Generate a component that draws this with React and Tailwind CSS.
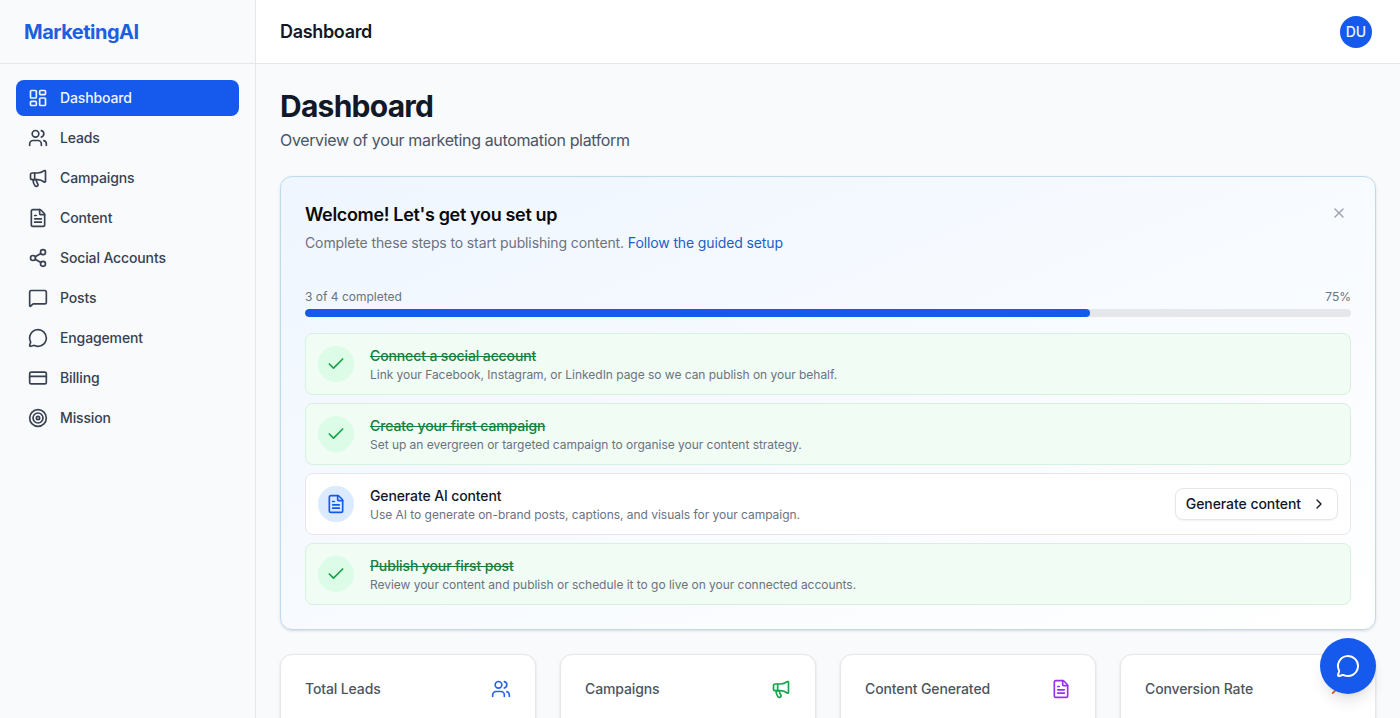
import {
  LayoutDashboard,
  Users,
  Megaphone,
  FileText,
  Share2,
  MessageSquare,
  MessageCircle,
  CreditCard,
  Target,
  Check,
  X,
  ChevronRight,
  TrendingUp,
} from "lucide-react";

const navItems = [
  { label: "Dashboard", icon: LayoutDashboard, active: true },
  { label: "Leads", icon: Users },
  { label: "Campaigns", icon: Megaphone },
  { label: "Content", icon: FileText },
  { label: "Social Accounts", icon: Share2 },
  { label: "Posts", icon: MessageSquare },
  { label: "Engagement", icon: MessageCircle },
  { label: "Billing", icon: CreditCard },
  { label: "Mission", icon: Target },
];

const steps = [
  {
    title: "Connect a social account",
    text: "Link your Facebook, Instagram, or LinkedIn page so we can publish on your behalf.",
    done: true,
  },
  {
    title: "Create your first campaign",
    text: "Set up an evergreen or targeted campaign to organise your content strategy.",
    done: true,
  },
  {
    title: "Generate AI content",
    text: "Use AI to generate on-brand posts, captions, and visuals for your campaign.",
    done: false,
  },
  {
    title: "Publish your first post",
    text: "Review your content and publish or schedule it to go live on your connected accounts.",
    done: true,
  },
];

const stats = [
  { label: "Total Leads", icon: <Users className="w-5 h-5 text-[#2563eb]" /> },
  { label: "Campaigns", icon: <Megaphone className="w-5 h-5 text-[#16a34a]" /> },
  { label: "Content Generated", icon: <FileText className="w-5 h-5 text-[#9333ea]" /> },
  { label: "Conversion Rate", icon: <TrendingUp className="w-5 h-5 text-[#ea580c]" /> },
];

const Sidebar = () => (
  <aside className="w-64 shrink-0 h-full bg-[#f9fafc] border-r border-[#e5e7eb]">
    <div className="h-16 flex items-center px-6 border-b border-[#e5e7eb]">
      <span className="text-xl font-bold tracking-tight text-[#1d5fdc]">MarketingAI</span>
    </div>
    <nav className="p-4 flex flex-col gap-1">
      {navItems.map((item) => (
        <a
          key={item.label}
          className={`h-9 flex items-center gap-3 px-3 rounded-lg text-sm font-medium tracking-[-0.13px] ${
            item.active ? "bg-[#1559ed] text-[#eff6ff]" : "text-[#374151]"
          }`}
        >
          <item.icon className="w-5 h-5" />
          {item.label}
        </a>
      ))}
    </nav>
  </aside>
);

const Step = ({ title, text, done }) => (
  <div
    className={`h-[62px] flex items-center gap-4 px-3 rounded-lg border ${
      done ? "bg-[#f1fcf5] border-[#d6f2df]" : "bg-white border-[#e5e7eb]"
    }`}
  >
    <div
      className={`w-9 h-9 shrink-0 rounded-full flex items-center justify-center ${
        done ? "bg-[#dcfce7] text-[#16a34a]" : "bg-[#dbeafe] text-[#1559ed]"
      }`}
    >
      {done ? <Check className="w-5 h-5" /> : <FileText className="w-5 h-5" />}
    </div>
    <div className="flex-1 min-w-0">
      <p
        className={`text-sm font-medium tracking-[-0.12px] ${
          done ? "line-through text-[#15803d]" : "text-[#111827]"
        }`}
      >
        {title}
      </p>
      <p className="mt-px text-xs tracking-[-0.03px] text-[#6b7280]">{text}</p>
    </div>
    {!done && (
      <button className="h-8 flex items-center gap-2.5 px-2.5 bg-white border border-[#e5e7eb] rounded-lg shadow-xs text-sm font-medium tracking-[-0.06px] text-[#111827]">
        Generate content
        <ChevronRight className="w-4 h-4" />
      </button>
    )}
  </div>
);

export default function App() {
  return (
    <div className="h-screen flex overflow-hidden bg-[#f8fafc] font-['Inter',sans-serif]">
      <Sidebar />
      <div className="flex-1 min-w-0 flex flex-col">
        <header className="h-16 shrink-0 flex items-center justify-between pl-6 pr-7 bg-white border-b border-[#e5e7eb]">
          <h1 className="text-lg font-semibold tracking-[-0.33px] text-[#111827]">Dashboard</h1>
          <div className="w-8 h-8 rounded-full bg-[#1559ed] text-[#eff6ff] text-sm font-medium flex items-center justify-center">
            DU
          </div>
        </header>
        <main className="flex-1 overflow-hidden p-6">
          <h2 className="text-3xl font-bold tracking-tight text-[#111827]">Dashboard</h2>
          <p className="mt-1 text-base tracking-[-0.35px] text-[#4b5563]">Overview of your marketing automation platform</p>

          <section className="relative mt-6 p-6 rounded-xl border border-[#c0daec] bg-linear-to-br from-[#eff6ff] to-white shadow-sm">
            <button className="absolute top-7 right-7 text-[#9ca3af]">
              <X className="w-4 h-4" />
            </button>
            <h3 className="text-lg font-semibold tracking-[-0.34px] text-[#0a0a0a]">Welcome! Let's get you set up</h3>
            <p className="mt-1 text-sm tracking-[-0.12px] text-[#6b7280]">
              Complete these steps to start publishing content.{" "}
              <a className="text-[#1d5fc4]">Follow the guided setup</a>
            </p>
            <div className="mt-9 flex justify-between text-xs text-[#6b7280]">
              <span>3 of 4 completed</span>
              <span>75%</span>
            </div>
            <div className="mt-1 h-2 rounded-full bg-[#e5e7eb] overflow-hidden">
              <div className="w-3/4 h-full rounded-full bg-[#1559ed]" />
            </div>
            <div className="mt-4 flex flex-col gap-2">
              {steps.map((step) => (
                <Step key={step.title} {...step} />
              ))}
            </div>
          </section>

          <div className="mt-6 grid grid-cols-4 gap-6">
            {stats.map((stat) => (
              <div key={stat.label} className="h-32 px-6 pt-6 bg-white border border-[#e5e7eb] rounded-xl shadow-sm">
                <div className="flex items-center justify-between">
                  <span className="text-sm font-medium tracking-[-0.12px] text-[#4b5563]">{stat.label}</span>
                  {stat.icon}
                </div>
              </div>
            ))}
          </div>
        </main>
      </div>
      <button className="fixed right-6 bottom-6 w-14 h-14 rounded-full bg-[#1559ed] text-white shadow-lg flex items-center justify-center">
        <MessageCircle className="w-6 h-6" />
      </button>
    </div>
  );
}
